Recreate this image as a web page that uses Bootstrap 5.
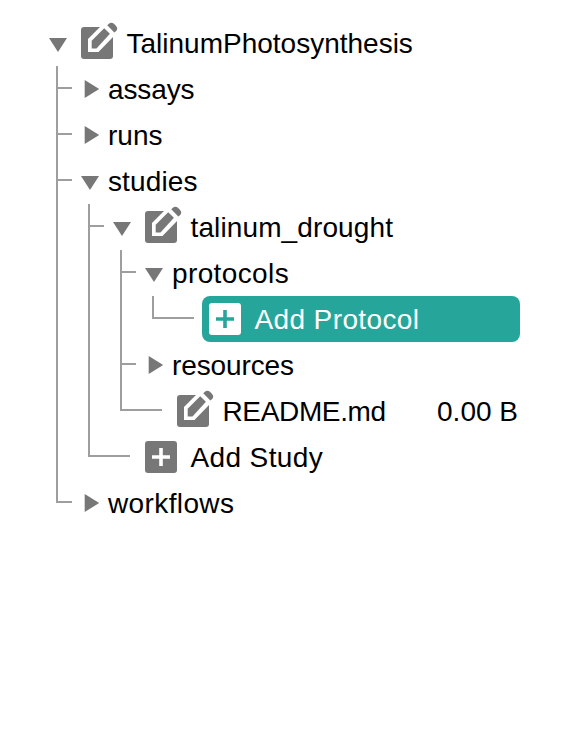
<!DOCTYPE html>
<html lang="en">
<head>
<meta charset="utf-8">
<meta name="viewport" content="width=device-width, initial-scale=1">
<title>TalinumPhotosynthesis</title>
<link href="https://cdn.jsdelivr.net/npm/bootstrap@5.3.0/dist/css/bootstrap.min.css" rel="stylesheet">
<style>
  body { font: 28px/46px "Liberation Sans", Arial, sans-serif; color: #000; background: #fff; }
  .tree { padding: 20px 60px 0 56px; }
  .tree-row { height: 46px; padding-left: 25px; white-space: nowrap; }
  .tree-row > span { padding-top: 2px; }
  .tree-root { padding-left: 0; margin-left: -7px; }
  .tree-leaf { padding-left: 57px; padding-right: 2px; }
  .tree-active { margin-left: 50px; padding-left: 7px; border-radius: 8px; background: #26a69a; color: #fff; }
  .tree-caret { width: 26px; height: 46px; margin-right: 1px; fill: #777; }
  .has-icon > .tree-caret { margin-right: 6px; }
  .tree-icon { width: 38px; height: 46px; margin-right: 7.500px; fill: #777; color: #fff; }
  .tree-active .tree-icon { fill: #fff; color: #26a69a; }
  .ls-tight { letter-spacing: -.35px; }
  .ls-snug { letter-spacing: -.12px; }
  .ls-open { letter-spacing: .12px; }
  .ls-wide { letter-spacing: .38px; }
  /* connector lines between siblings */
  .tree-node { position: relative; }
  .tree-group .tree-group { margin-left: 32px; }
  .tree-node::before { content: ""; position: absolute; left: 0; top: 0; width: 2px; height: 100%; background: #9e9e9e; }
  .tree-node:last-child::before { height: 23px; }
  .tree-node::after { content: ""; position: absolute; left: 0; top: 21px; width: 16px; height: 2px; background: #9e9e9e; }
  .tree-end::after { width: 42px; }
</style>
</head>
<body>
<svg class="position-absolute" width="0" height="0" xmlns="http://www.w3.org/2000/svg">
  <symbol id="down" viewBox="0 0 26 46"><path d="M0 18h18L9 32z"/></symbol>
  <symbol id="right" viewBox="0 0 26 46"><path d="M3.700 14v18l14.500-9z"/></symbol>
  <symbol id="edit" viewBox="0 0 38 46">
    <rect y="7" width="32" height="32" rx="3"/>
    <path fill="currentColor" d="M7 19 23 3 37 12.500 32 17 17.500 32H7z"/>
    <path d="M10.700 20.700 23.200 8.200 28.900 13.700 15.500 28.500H10.700z"/>
    <path d="M26.300 5.200 27.600 4a4 4 0 0 1 5.600 0l1.700 1.700a4 4 0 0 1 0 5.600L33.300 12.500z"/>
  </symbol>
  <symbol id="plus" viewBox="0 0 38 46">
    <rect y="7" width="32" height="32" rx="3"/>
    <path fill="none" stroke="currentColor" stroke-width="3.600" d="M7 23h18M16 14v18"/>
  </symbol>
</svg>
<main class="tree">
  <div class="tree-row tree-root has-icon d-flex align-items-center">
    <svg class="tree-caret flex-shrink-0"><use href="#down"/></svg>
    <svg class="tree-icon flex-shrink-0"><use href="#edit"/></svg>
    <span>TalinumPhotosynthesis</span>
  </div>
  <ul class="tree-group list-unstyled mb-0">
    <li class="tree-node"><div class="tree-row d-flex align-items-center"><svg class="tree-caret flex-shrink-0"><use href="#right"/></svg><span class="ls-snug">assays</span></div></li>
    <li class="tree-node"><div class="tree-row d-flex align-items-center"><svg class="tree-caret flex-shrink-0"><use href="#right"/></svg><span>runs</span></div></li>
    <li class="tree-node">
      <div class="tree-row d-flex align-items-center"><svg class="tree-caret flex-shrink-0"><use href="#down"/></svg><span class="ls-open">studies</span></div>
      <ul class="tree-group list-unstyled mb-0">
        <li class="tree-node">
          <div class="tree-row has-icon d-flex align-items-center">
            <svg class="tree-caret flex-shrink-0"><use href="#down"/></svg>
            <svg class="tree-icon flex-shrink-0"><use href="#edit"/></svg>
            <span class="ls-open">talinum_drought</span>
          </div>
          <ul class="tree-group list-unstyled mb-0">
            <li class="tree-node">
              <div class="tree-row d-flex align-items-center"><svg class="tree-caret flex-shrink-0"><use href="#down"/></svg><span class="ls-wide">protocols</span></div>
              <ul class="tree-group list-unstyled mb-0">
                <li class="tree-node tree-end">
                  <div class="tree-row tree-active d-flex align-items-center">
                    <svg class="tree-icon flex-shrink-0"><use href="#plus"/></svg>
                    <span class="ls-wide">Add Protocol</span>
                  </div>
                </li>
              </ul>
            </li>
            <li class="tree-node"><div class="tree-row d-flex align-items-center"><svg class="tree-caret flex-shrink-0"><use href="#right"/></svg><span class="ls-snug">resources</span></div></li>
            <li class="tree-node tree-end">
              <div class="tree-row tree-leaf d-flex align-items-center">
                <svg class="tree-icon flex-shrink-0"><use href="#edit"/></svg>
                <span class="ls-tight">README.md</span><span class="ms-auto">0.00 B</span>
              </div>
            </li>
          </ul>
        </li>
        <li class="tree-node tree-end">
          <div class="tree-row tree-leaf d-flex align-items-center">
            <svg class="tree-icon flex-shrink-0"><use href="#plus"/></svg>
            <span class="ls-wide">Add Study</span>
          </div>
        </li>
      </ul>
    </li>
    <li class="tree-node"><div class="tree-row d-flex align-items-center"><svg class="tree-caret flex-shrink-0"><use href="#right"/></svg><span class="ls-wide">workflows</span></div></li>
  </ul>
</main>
<script src="https://cdn.jsdelivr.net/npm/bootstrap@5.3.0/dist/js/bootstrap.bundle.min.js"></script>
</body>
</html>
